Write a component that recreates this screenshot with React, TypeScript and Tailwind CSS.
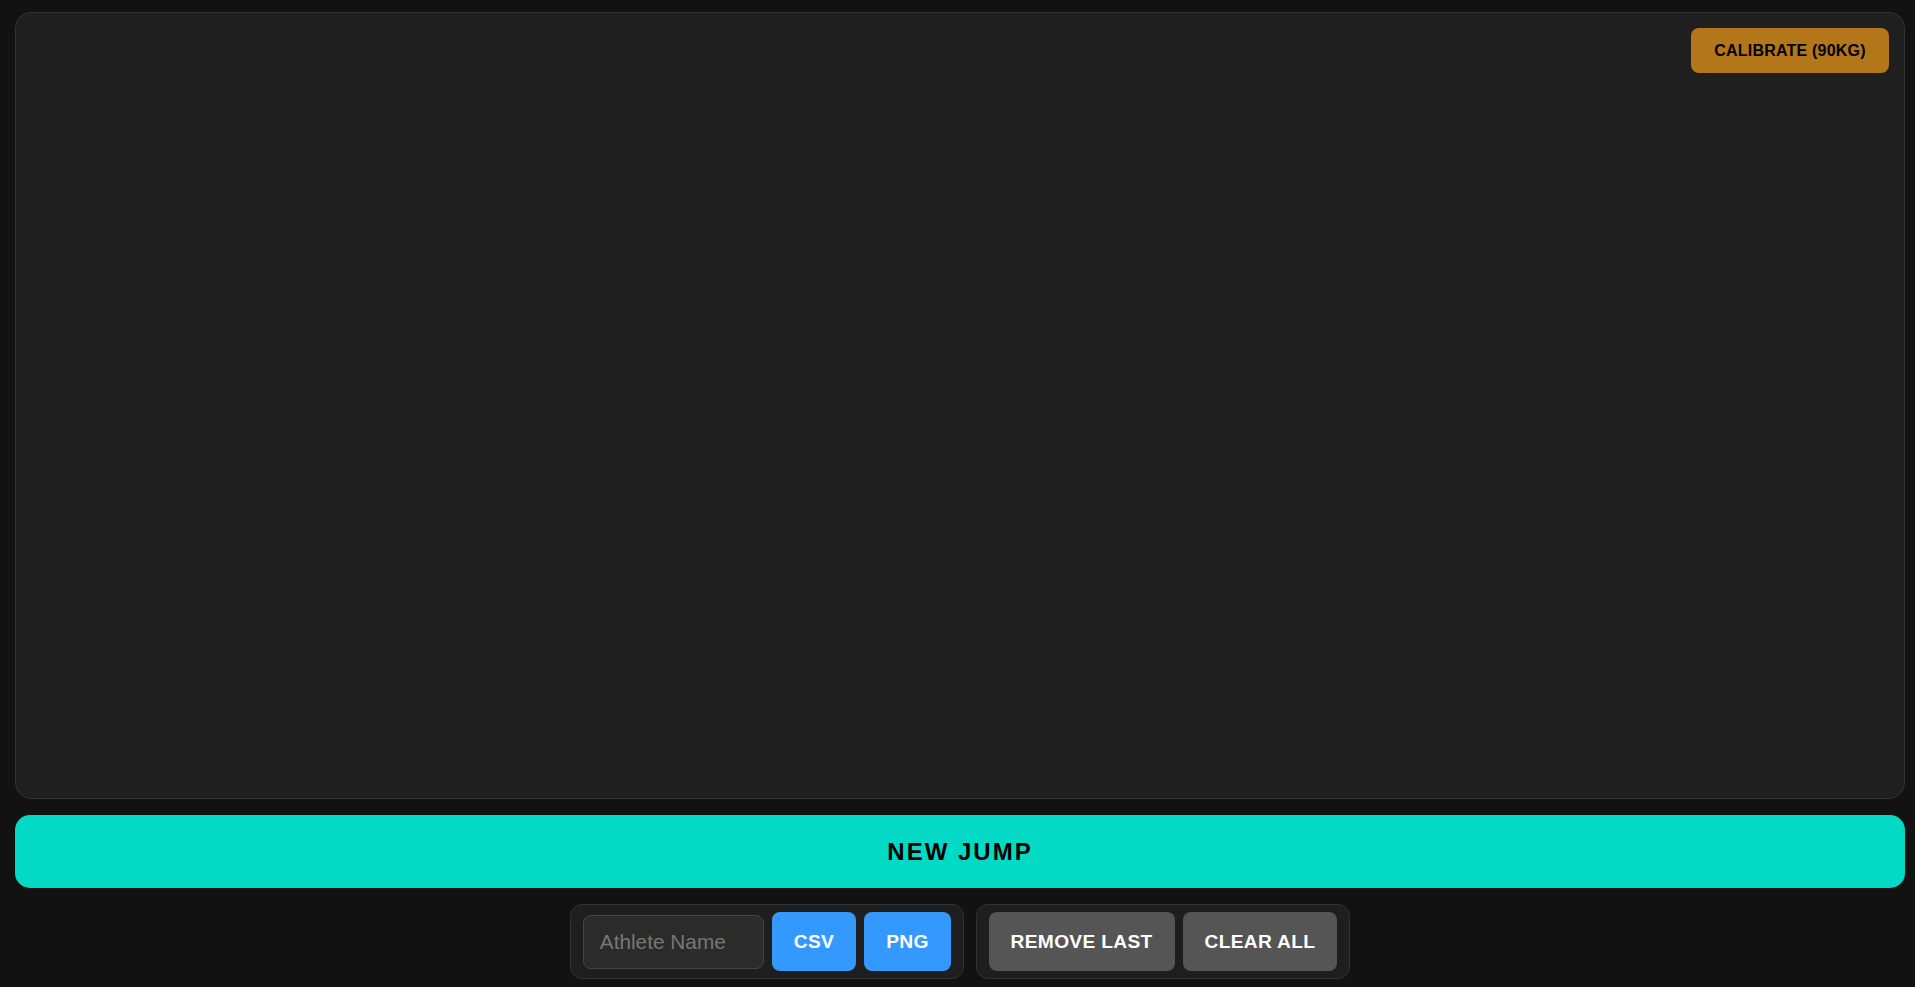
import { useState } from "react";

const font = { fontFamily: '"Liberation Sans", Arial, sans-serif' };

function ToolButton({
  children,
  color,
}: {
  children: React.ReactNode;
  color: "blue" | "gray";
}) {
  const tone =
    color === "blue"
      ? "bg-[#3399ff] hover:bg-[#4aa5ff]"
      : "bg-[#555555] hover:bg-[#606060]";
  return (
    <button
      className={`h-[59px] px-[22px] rounded-[8px] text-white font-bold text-[19.2px] tracking-[0.3px] leading-none ${tone}`}
    >
      {children}
    </button>
  );
}

export default function App() {
  const [athlete, setAthlete] = useState("");

  return (
    <div
      className="h-screen bg-[#121212] flex flex-col pt-[12px] pb-[8px] pl-[15px] pr-[10px] gap-[16px] overflow-hidden"
      style={font}
    >
      <div className="relative flex-1 rounded-[16px] border border-[#333333] bg-[#1f1f1f]">
        <button className="absolute top-[15px] right-[15px] h-[45px] w-[198px] rounded-[8px] bg-[#b37618] text-black font-bold text-[16px] tracking-[0.2px] leading-none">
          CALIBRATE (90KG)
        </button>
      </div>

      <button className="h-[73px] shrink-0 rounded-[15px] bg-[#03dac6] text-black font-bold text-[24px] tracking-[2px] leading-none">
        NEW JUMP
      </button>

      <div className="flex justify-center gap-[12px] shrink-0">
        <div className="flex items-center gap-[8px] px-[12px] py-[7px] rounded-[12px] border border-[#333333] bg-[#1e1e1e]">
          <input
            value={athlete}
            onChange={(e) => setAthlete(e.target.value)}
            placeholder="Athlete Name"
            className="w-[181px] h-[54px] px-[16px] rounded-[8px] border border-[#444444] bg-[#2b2b2b] text-white text-[20.8px] placeholder:text-[#777777] outline-none"
          />
          <ToolButton color="blue">CSV</ToolButton>
          <ToolButton color="blue">PNG</ToolButton>
        </div>
        <div className="flex items-center gap-[8px] px-[12px] py-[7px] rounded-[12px] border border-[#333333] bg-[#1e1e1e]">
          <ToolButton color="gray">REMOVE LAST</ToolButton>
          <ToolButton color="gray">CLEAR ALL</ToolButton>
        </div>
      </div>
    </div>
  );
}
